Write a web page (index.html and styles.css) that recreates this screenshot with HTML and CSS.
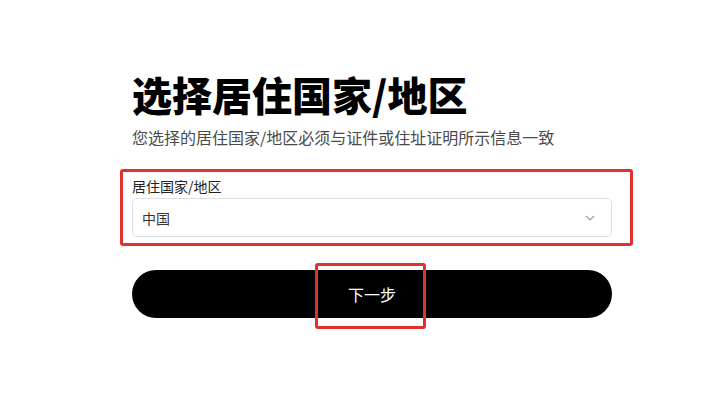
FILE: index.html
```html
<!DOCTYPE html>
<html lang="zh-CN">
<head>
<meta charset="utf-8">
<title>选择居住国家/地区</title>
<link rel="stylesheet" href="styles.css">
</head>
<body>
<main class="page">
  <h1 class="title">选择居住国家/地区</h1>
  <p class="subtitle">您选择的居住国家/地区必须与证件或住址证明所示信息一致</p>
  <div class="field">
    <label class="field-label">居住国家/地区</label>
    <div class="select">
      <span class="select-value">中国</span>
      <svg class="chevron" width="10" height="6" viewBox="0 0 10 6"><path d="M1 1 L5 5 L9 1" fill="none" stroke="#999" stroke-width="1.1"/></svg>
    </div>
    <div class="mark mark-field"></div>
  </div>
  <div class="actions">
    <button class="btn-next">下一步</button>
    <div class="mark mark-btn"></div>
  </div>
</main>
</body>
</html>
```
FILE: styles.css
```css
* { box-sizing: border-box; }
html, body { margin: 0; padding: 0; background: #fff; }
body {
  font-family: "Noto Sans CJK SC", "Noto Sans", sans-serif;
  color: #000;
}
.page {
  width: 480px;
  margin-left: 132px;
  padding-top: 66px;
}
.title {
  margin: 0;
  font-size: 40px;
  line-height: 56px;
  font-weight: 900;
  letter-spacing: 0;
  color: #000;
}
.subtitle {
  margin: 4px 0 0;
  font-size: 16px;
  line-height: 22px;
  color: #4a4a4a;
}
.field {
  position: relative;
  margin-top: 28px;
}
.field-label {
  display: block;
  font-size: 14px;
  line-height: 20px;
  color: #222;
}
.select {
  margin-top: 2px;
  height: 39px;
  border: 1px solid #dcdfe2;
  border-radius: 5px;
  display: flex;
  align-items: center;
  justify-content: space-between;
  padding: 0 16px 0 9px;
}
.select-value {
  font-size: 14px;
  color: #333;
}
.chevron { display: block; }
.actions {
  position: relative;
  margin-top: 33px;
  padding-bottom: 12px;
}
.btn-next {
  display: block;
  width: 480px;
  height: 48px;
  border: 0;
  border-radius: 24px;
  background: #000;
  color: #fff;
  font-family: inherit;
  font-size: 16px;
}
.mark {
  position: absolute;
  z-index: 2;
  border: 3px solid #e0322a;
  border-radius: 3px;
  pointer-events: none;
}
.mark-field {
  left: -12px;
  top: -7px;
  width: 513px;
  height: 77px;
}
.mark-btn {
  left: 183px;
  top: -7px;
  width: 111px;
  height: 66px;
}
```
